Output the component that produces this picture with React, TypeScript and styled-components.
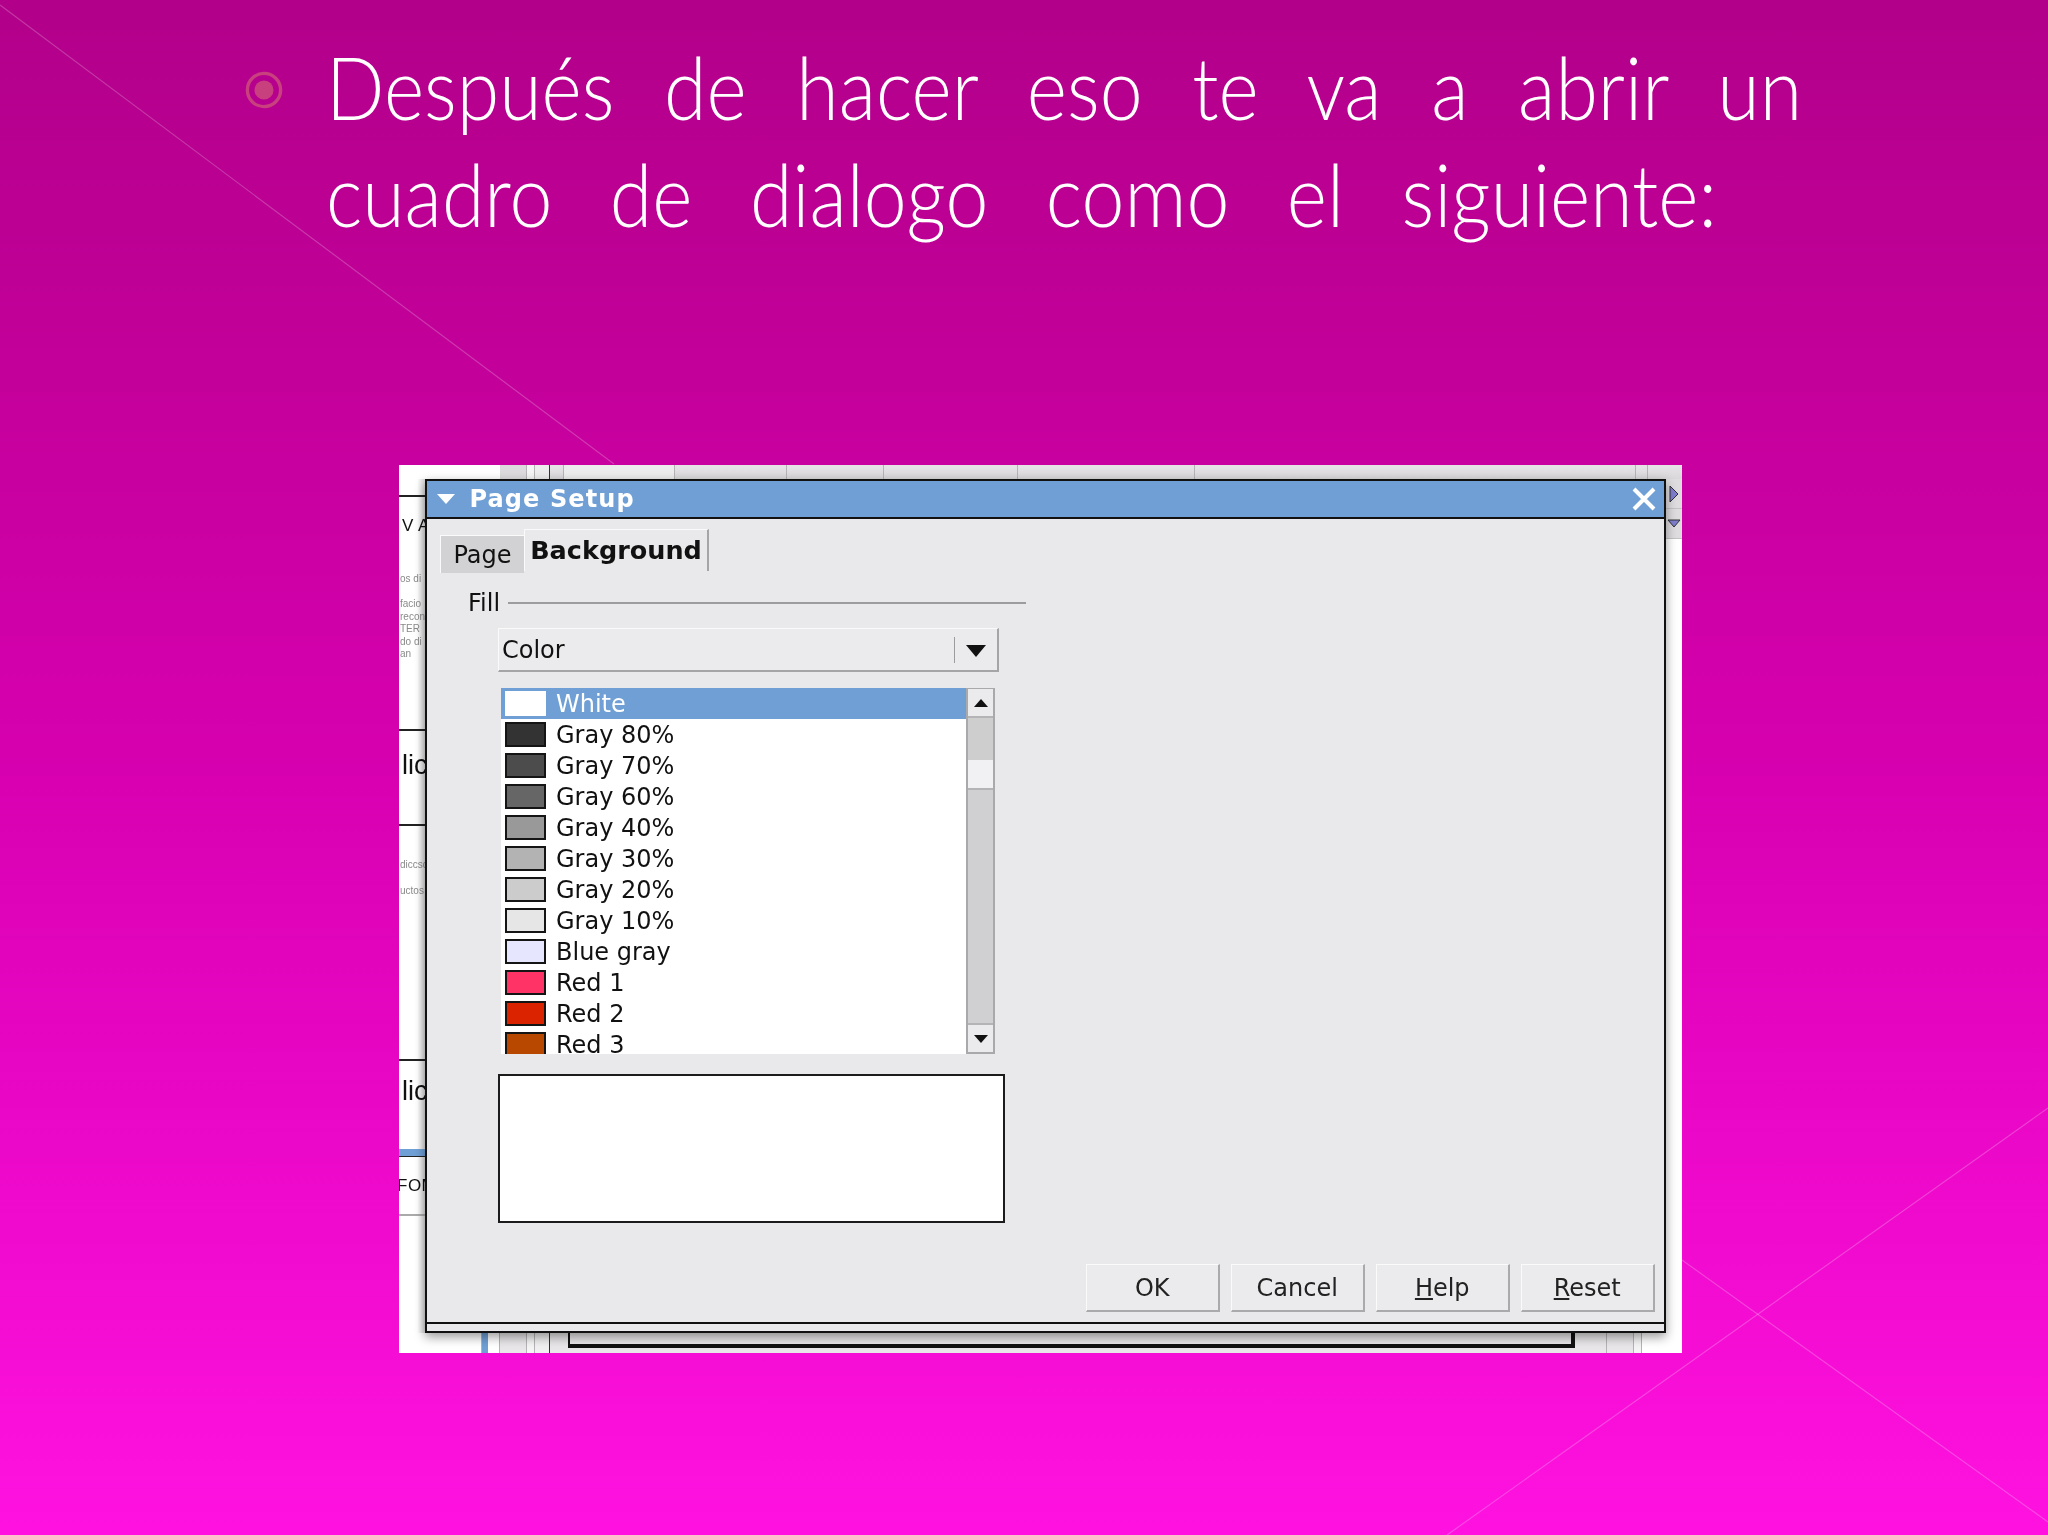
import React from "react";
import styled, { createGlobalStyle } from "styled-components";

const Global = createGlobalStyle`
  html, body { margin: 0; padding: 0; }
  body { background: #ff12e0; }
`;

const Slide = styled.div`
  position: relative;
  width: 2048px;
  height: 1535px;
  overflow: hidden;
  background: linear-gradient(180deg, #b2008a 0%, #c4009b 25%, #d700b0 50%, #ec08c9 75%, #ff12e0 100%);
`;

const Decor = styled.svg`
  position: absolute;
  inset: 0;
  width: 2048px;
  height: 1535px;
`;

const Heading = styled.div`
  position: relative;
  display: flex;
  align-items: flex-start;
  padding: 33px 0 0 245px;
  height: 465px;
  box-sizing: border-box;
`;

const BulletMark = styled.svg`
  flex: none;
  width: 38px;
  height: 38px;
  margin-top: 38px;
  margin-right: 43px;
`;

const HeadingText = styled.div`
  font-family: "Lato", "Liberation Sans", sans-serif;
  font-weight: 300;
  font-size: 77px;
  line-height: 107px;
  color: #fff;
`;

const HeadingLine = styled.div<{ $w: number }>`
  width: ${(p) => p.$w}px;
  text-align: justify;
  text-align-last: justify;
  white-space: nowrap;
  transform: scaleY(1.12);
`;

const BackWindow = styled.div`
  position: relative;
  margin-left: 399px;
  width: 1283px;
  height: 888px;
  background: #fff;
  display: flex;
  flex-direction: column;
  filter: blur(0.45px);
`;

const TopStrip = styled.div`
  flex: none;
  height: 14px;
  display: flex;
  background: linear-gradient(180deg, #e6e4e6, #d9d7d9);
`;

const StripSeg = styled.div<{ $w: number; $bg?: string; $edge?: string }>`
  flex: none;
  box-sizing: border-box;
  width: ${(p) => p.$w}px;
  background: ${(p) => p.$bg || "transparent"};
  border-right: 1px solid ${(p) => p.$edge || "#b5b3b5"};
`;

const StripFill = styled.div<{ $bg?: string }>`
  flex: 1;
  background: ${(p) => p.$bg || "transparent"};
`;

const Middle = styled.div`
  flex: none;
  height: 854px;
  display: flex;
  justify-content: space-between;
`;

const LeftSliver = styled.div`
  width: 26px;
  display: flex;
  flex-direction: column;
  overflow: hidden;
  font-family: "Liberation Sans", sans-serif;
  color: #111;
  background: linear-gradient(90deg, #fff 70%, #d8d8d8 100%);
`;

const SliverCell = styled.div<{ $h: number; $edge?: string; $pt?: number }>`
  flex: none;
  box-sizing: border-box;
  height: ${(p) => p.$h}px;
  padding-top: ${(p) => p.$pt || 0}px;
  border-bottom: 2px solid ${(p) => p.$edge || "#222"};
  white-space: nowrap;
`;

const SliverBig = styled.div`
  font-size: 27px;
  line-height: 32px;
  margin-left: 3px;
`;

const SliverMid = styled.div<{ $ml?: number }>`
  font-size: 17px;
  line-height: 18px;
  margin-left: ${(p) => p.$ml ?? 3}px;
  letter-spacing: 0.5px;
`;

const SliverTiny = styled.div<{ $mt?: number }>`
  font-size: 10px;
  line-height: 12.4px;
  margin-top: ${(p) => p.$mt || 0}px;
  color: #8a8a8a;
  margin-left: 1px;
`;

const BlueBar = styled.div`
  flex: none;
  height: 7px;
  background: #6f9fd4;
  border-bottom: 1px solid #222;
`;

const RightSliver = styled.div`
  width: 16px;
  display: flex;
  flex-direction: column;
  background: #fff;
`;

const ArrowCell = styled.div`
  flex: none;
  height: 30px;
  box-sizing: border-box;
  background: #dedcde;
  border-bottom: 1px solid #c4c2c4;
  display: flex;
  align-items: center;
  justify-content: center;
`;

const BottomStrip = styled.div`
  flex: none;
  height: 20px;
  display: flex;
  background: #e8e6e8;
`;

const BlankSeg = styled.div<{ $w: number }>`
  flex: none;
  width: ${(p) => p.$w}px;
  background: #fff;
`;

const Bracket = styled.div`
  flex: none;
  width: 1007px;
  height: 15px;
  margin-left: 18px;
  box-sizing: border-box;
  border-left: 2px solid #111;
  border-right: 4px solid #111;
  border-bottom: 4px solid #111;
`;

const Dialog = styled.div`
  position: absolute;
  left: 25.5px;
  top: 14px;
  width: 1241.5px;
  height: 854px;
  box-sizing: border-box;
  border: 2px solid #111;
  background: #e9e8ea;
  display: flex;
  flex-direction: column;
  box-shadow: 0 4px 10px rgba(0, 0, 0, 0.4);
  font-family: "DejaVu Sans", sans-serif;
  font-size: 24px;
  color: #111;
`;

const TitleBar = styled.div`
  flex: none;
  box-sizing: border-box;
  height: 38px;
  border-bottom: 2px solid #111;
  background: #6f9fd4;
  color: #fff;
  display: flex;
  align-items: center;
  padding: 0 8px 0 9px;
`;

const TitleText = styled.div`
  flex: 1;
  margin-left: 14px;
  font-weight: 700;
  font-size: 24px;
  letter-spacing: 1.1px;
`;

const DialogBody = styled.div`
  flex: 1;
  min-height: 0;
  display: flex;
  flex-direction: column;
  padding: 10px 9px 10px 13.5px;
`;

const TabRow = styled.div`
  flex: none;
  display: flex;
  height: 44px;
`;

const Tab = styled.div<{ $active?: boolean }>`
  flex: none;
  box-sizing: border-box;
  height: ${(p) => (p.$active ? 42 : 38)}px;
  margin-top: ${(p) => (p.$active ? 0 : 6)}px;
  width: ${(p) => (p.$active ? 185 : 84)}px;
  background: ${(p) => (p.$active ? "#e9e8ea" : "#d2d1d3")};
  border-top: 1px solid #fafafa;
  border-left: 1px solid #fafafa;
  border-right: ${(p) => (p.$active ? "2px solid #a5a4a6" : "none")};
  display: flex;
  align-items: center;
  justify-content: center;
  font-weight: ${(p) => (p.$active ? 700 : 400)};
  font-size: ${(p) => (p.$active ? 25.5 : 24)}px;
  padding-bottom: ${(p) => (p.$active ? 2 : 0)}px;
`;

const FormArea = styled.div`
  flex: none;
  padding: 16px 0 0 28px;
`;

const FillRow = styled.div`
  display: flex;
  align-items: center;
  width: 558px;
  height: 28px;
`;

const RuleLine = styled.div`
  flex: 1;
  height: 2px;
  margin-left: 8px;
  background: #9c9b9d;
`;

const Combo = styled.div`
  box-sizing: border-box;
  margin: 11px 0 0 30px;
  width: 501px;
  height: 44px;
  display: flex;
  align-items: center;
  background: #ebeaec;
  border: 1px solid #fafafa;
  border-right: 2px solid #a5a4a6;
  border-bottom: 2px solid #a5a4a6;
  padding-left: 3px;
`;

const ComboLabel = styled.div`
  flex: 1;
`;

const ComboDivider = styled.div`
  width: 1px;
  height: 26px;
  background: #9c9b9d;
`;

const ComboArrow = styled.svg`
  flex: none;
  width: 20px;
  height: 12px;
  margin: 2px 11px 0 11px;
`;

const ListBox = styled.div`
  margin: 16px 0 0 33px;
  width: 494px;
  height: 366px;
  display: flex;
  background: #fff;
`;

const ListItems = styled.div`
  flex: 1;
  overflow: hidden;
  height: 366px;
`;

const ColorRow = styled.div<{ $selected?: boolean }>`
  height: 31px;
  display: flex;
  align-items: center;
  background: ${(p) => (p.$selected ? "#6f9fd4" : "#fff")};
  color: ${(p) => (p.$selected ? "#fff" : "#111")};
`;

const Swatch = styled.div<{ $color: string; $selected?: boolean }>`
  flex: none;
  box-sizing: border-box;
  width: 41px;
  height: 25px;
  margin: 0 10px 0 4px;
  background: ${(p) => p.$color};
  border: 2px solid ${(p) => (p.$selected ? "#fff" : "#151515")};
`;

const ScrollBar = styled.div`
  flex: none;
  width: 29px;
  box-sizing: border-box;
  display: flex;
  flex-direction: column;
  background: #d0cfd1;
  border: 2px solid #a9a8aa;
  border-top-width: 1px;
`;

const ScrollButton = styled.div`
  flex: none;
  height: 27px;
  display: flex;
  align-items: center;
  justify-content: center;
  background: #ebeaec;
`;

const ScrollThumb = styled.div`
  flex: none;
  height: 44px;
  box-sizing: border-box;
  background: #cfcecf;
  border-top: 2px solid #b4b3b5;
`;

const ScrollGap = styled.div`
  flex: none;
  height: 30px;
  box-sizing: border-box;
  background: #f1f0f2;
  border-bottom: 2px solid #b4b3b5;
`;

const ScrollTrack = styled.div`
  flex: 1;
  background: #d0cfd1;
  border-bottom: 2px solid #b4b3b5;
`;

const Preview = styled.div`
  box-sizing: border-box;
  margin: 20px 0 0 30px;
  width: 507px;
  height: 149px;
  background: #fff;
  border: 2px solid #1c1c1c;
`;

const ButtonRow = styled.div`
  flex: none;
  margin-top: auto;
  display: flex;
  justify-content: flex-end;
  gap: 10.5px;
`;

const ActionButton = styled.div`
  flex: none;
  box-sizing: border-box;
  width: 134.5px;
  height: 48px;
  display: flex;
  align-items: center;
  justify-content: center;
  background: #ebeaec;
  border: 1px solid #fafafa;
  border-right: 2px solid #aaa9ab;
  border-bottom: 2px solid #aaa9ab;
  color: #222;
`;

const Mnemonic = styled.span`
  text-decoration: underline;
`;

const DialogFoot = styled.div`
  flex: none;
  box-sizing: border-box;
  height: 9px;
  border-top: 2px solid #111;
  background: #e9e8ea;
`;

const colors: [string, string][] = [
  ["White", "#ffffff"],
  ["Gray 80%", "#333333"],
  ["Gray 70%", "#4c4c4c"],
  ["Gray 60%", "#666666"],
  ["Gray 40%", "#999999"],
  ["Gray 30%", "#b3b3b3"],
  ["Gray 20%", "#cccccc"],
  ["Gray 10%", "#e6e6e6"],
  ["Blue gray", "#e6e6ff"],
  ["Red 1", "#ff3366"],
  ["Red 2", "#dc2300"],
  ["Red 3", "#b84700"],
];

const TriSvg = ({ d, w = 16, h = 10 }: { d: string; w?: number; h?: number }) => (
  <svg width={w} height={h} viewBox={`0 0 ${w} ${h}`}>
    <path d={d} fill="#111" />
  </svg>
);

export default function App() {
  return (
    <Slide>
      <Global />
      <Decor viewBox="0 0 2048 1535">
        <g stroke="#ffffff" strokeOpacity="0.22" strokeWidth="1.2" fill="none">
          <path d="M0 5 L614 464" />
          <path d="M2048 1108 L1447 1535" />
          <path d="M1682 1260 L2048 1522" />
        </g>
      </Decor>
      <Heading>
        <BulletMark viewBox="0 0 40 40">
          <circle cx="20" cy="20" r="17.5" fill="none" stroke="#c9407f" strokeWidth="3.5" />
          <circle cx="20" cy="20" r="10" fill="#c9407f" />
        </BulletMark>
        <HeadingText>
          <HeadingLine $w={1476}>Después de hacer eso te va a abrir un</HeadingLine>
          <HeadingLine $w={1391}>cuadro de dialogo como el siguiente:</HeadingLine>
        </HeadingText>
      </Heading>
      <BackWindow>
        <TopStrip>
          <BlankSeg $w={101} />
          <StripSeg $w={27} $bg="#dcdadc" />
          <StripSeg $w={8} $bg="#f4f4f4" />
          <StripSeg $w={15} $edge="#333" $bg="#ececec" />
          <StripSeg $w={14} />
          <StripSeg $w={111} $bg="#ececec" />
          <StripSeg $w={112} />
          <StripSeg $w={97} />
          <StripSeg $w={134} />
          <StripSeg $w={177} />
          <StripSeg $w={441} />
          <StripSeg $w={12} />
          <StripFill />
        </TopStrip>
        <Middle>
          <LeftSliver>
            <SliverCell $h={18} />
            <SliverCell $h={234} $pt={20}>
              <SliverMid>V A</SliverMid>
              <SliverTiny $mt={38}>os di</SliverTiny>
              <SliverTiny $mt={13}>facio</SliverTiny>
              <SliverTiny>reconc</SliverTiny>
              <SliverTiny>TER</SliverTiny>
              <SliverTiny>do di</SliverTiny>
              <SliverTiny>an</SliverTiny>
            </SliverCell>
            <SliverCell $h={95} $pt={18}>
              <SliverBig>lic</SliverBig>
            </SliverCell>
            <SliverCell $h={235} $pt={33}>
              <SliverTiny>diccsq</SliverTiny>
              <SliverTiny $mt={14}>uctos</SliverTiny>
            </SliverCell>
            <SliverCell $h={88} $edge="transparent" $pt={14}>
              <SliverBig>lic</SliverBig>
            </SliverCell>
            <BlueBar />
            <SliverCell $h={59} $edge="#aaa" $pt={20}>
              <SliverMid $ml={-2}>FOM</SliverMid>
            </SliverCell>
          </LeftSliver>
          <RightSliver>
            <ArrowCell>
              <svg width="10" height="18" viewBox="0 0 10 18">
                <path d="M1 1 L9 9 L1 17 Z" fill="#7f7fd0" stroke="#333" strokeWidth="1" />
              </svg>
            </ArrowCell>
            <ArrowCell>
              <svg width="14" height="9" viewBox="0 0 14 9">
                <path d="M1 1 L13 1 L7 8 Z" fill="#7f7fd0" stroke="#333" strokeWidth="1" />
              </svg>
            </ArrowCell>
          </RightSliver>
        </Middle>
        <BottomStrip>
          <BlankSeg $w={69} />
          <StripSeg $w={14} $bg="#fff" $edge="#b5b3b5" />
          <StripSeg $w={6} $bg="#6f9fd4" $edge="#6f9fd4" />
          <StripSeg $w={12} $bg="#fff" />
          <StripSeg $w={27} />
          <StripSeg $w={8} $bg="#f4f4f4" />
          <StripSeg $w={15} $edge="#333" $bg="#f0f0f0" />
          <Bracket />
          <StripSeg $w={32} />
          <StripSeg $w={27} />
          <StripSeg $w={8} $bg="#f4f4f4" />
          <StripFill $bg="#fff" />
        </BottomStrip>
        <Dialog>
          <TitleBar>
            <svg width="20" height="12" viewBox="0 0 20 12">
              <path d="M1 1 L19 1 L10 11 Z" fill="#fff" />
            </svg>
            <TitleText>Page Setup</TitleText>
            <svg width="24" height="24" viewBox="0 0 24 24">
              <path d="M2 2 L22 22 M22 2 L2 22" stroke="#fff" strokeWidth="4" fill="none" />
            </svg>
          </TitleBar>
          <DialogBody>
            <TabRow>
              <Tab>Page</Tab>
              <Tab $active>Background</Tab>
            </TabRow>
            <FormArea>
              <FillRow>
                Fill
                <RuleLine />
              </FillRow>
              <Combo>
                <ComboLabel>Color</ComboLabel>
                <ComboDivider />
                <ComboArrow viewBox="0 0 20 12">
                  <path d="M0 0 L20 0 L10 12 Z" fill="#111" />
                </ComboArrow>
              </Combo>
              <ListBox>
                <ListItems>
                  {colors.map(([name, color], i) => (
                    <ColorRow key={name} $selected={i === 0}>
                      <Swatch $color={color} $selected={i === 0} />
                      {name}
                    </ColorRow>
                  ))}
                </ListItems>
                <ScrollBar>
                  <ScrollButton>
                    <TriSvg d="M8 1 L15 9 L1 9 Z" />
                  </ScrollButton>
                  <ScrollThumb />
                  <ScrollGap />
                  <ScrollTrack />
                  <ScrollButton>
                    <TriSvg d="M1 1 L15 1 L8 9 Z" />
                  </ScrollButton>
                </ScrollBar>
              </ListBox>
              <Preview />
            </FormArea>
            <ButtonRow>
              <ActionButton>OK</ActionButton>
              <ActionButton>Cancel</ActionButton>
              <ActionButton>
                <span>
                  <Mnemonic>H</Mnemonic>elp
                </span>
              </ActionButton>
              <ActionButton>
                <span>
                  <Mnemonic>R</Mnemonic>eset
                </span>
              </ActionButton>
            </ButtonRow>
          </DialogBody>
          <DialogFoot />
        </Dialog>
      </BackWindow>
    </Slide>
  );
}
